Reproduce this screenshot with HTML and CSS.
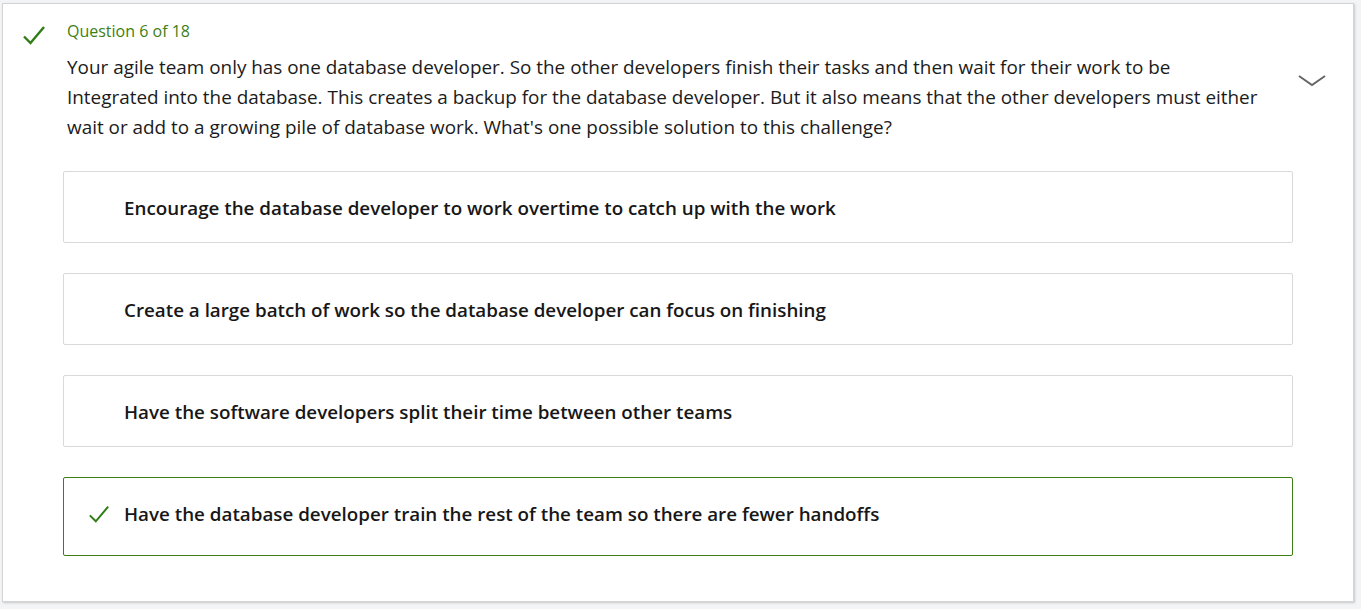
FILE: index.html
```html
<!DOCTYPE html>
<html>
<head>
<meta charset="utf-8">
<link rel="stylesheet" href="styles.css">
</head>
<body>
<div class="page">
  <div class="card">
    <div class="status">
      <svg class="check" viewBox="0 0 24 24" width="24" height="24"><path d="M2 13.5 L8.5 20 L22 4" fill="none" stroke="#2f7d14" stroke-width="2.4" stroke-linecap="butt" stroke-linejoin="miter"/></svg>
    </div>
    <div class="main">
      <div class="counter">Question 6 of 18</div>
      <p class="question">Your agile team only has one database developer. So the other developers finish their tasks and then wait for their work to be Integrated into the database. This creates a backup for the database developer. But it also means that the other developers must either wait or add to a growing pile of database work. What's one possible solution to this challenge?</p>
      <ul class="options">
        <li class="option"><span class="mark"></span><span class="label">Encourage the database developer to work overtime to catch up with the work</span></li>
        <li class="option"><span class="mark"></span><span class="label">Create a large batch of work so the database developer can focus on finishing</span></li>
        <li class="option"><span class="mark"></span><span class="label">Have the software developers split their time between other teams</span></li>
        <li class="option correct"><span class="mark"><svg viewBox="0 0 24 24" width="22" height="22"><path d="M2 13.5 L8.5 20 L22 4" fill="none" stroke="#2f7d14" stroke-width="2.2"/></svg></span><span class="label">Have the database developer train the rest of the team so there are fewer handoffs</span></li>
      </ul>
    </div>
    <div class="toggle">
      <svg viewBox="0 0 28 12" width="28" height="12"><path d="M1 1 L14 10 L27 1" fill="none" stroke="#666" stroke-width="2"/></svg>
    </div>
  </div>
</div>
</body>
</html>
```
FILE: styles.css
```css
html, body {
  margin: 0;
  padding: 0;
  background: #f3f4f6;
  font-family: "Open Sans", "Noto Sans", sans-serif;
  color: #1b1b1b;
}
.page {
  padding: 3px 7px 7px 2px;
}
.card {
  background: #fff;
  border: 1px solid #d4d4d4;
  box-shadow: 1px 1px 2px rgba(0,0,0,0.18);
  display: flex;
  min-height: 599px;
  box-sizing: border-box;
  padding-bottom: 44px;
}
.status {
  width: 60px;
  flex: none;
  padding-left: 19px;
  padding-top: 19px;
  box-sizing: border-box;
}
.check {
  display: block;
}
.main {
  width: 1230px;
  flex: none;
}
.counter {
  color: #3d7f14;
  font-size: 16px;
  line-height: 22px;
  margin: 16px 0 0 4px;
}
.question {
  margin: 10px 0 0 4px;
  font-size: 18.9px;
  line-height: 30px;
  padding-right: 30px;
}
.options {
  list-style: none;
  margin: 29px 0 0 0;
  padding: 0;
  display: flex;
  flex-direction: column;
  gap: 30px;
}
.option {
  border: 1px solid #d9d9d9;
  border-radius: 2px;
  height: 72px;
  box-sizing: border-box;
  display: flex;
  align-items: center;
  font-size: 18.8px;
  font-weight: 600;
  color: #171717;
  padding-top: 1px;
}
.option.correct {
  border-color: #3d7f14;
  height: 79px;
  padding-top: 0;
  padding-bottom: 5px;
}
.mark {
  width: 60px;
  flex: none;
  display: flex;
  justify-content: flex-end;
  padding-right: 14px;
  box-sizing: border-box;
}
.mark svg {
  display: block;
}
.toggle {
  flex: 1;
  display: flex;
  justify-content: center;
  padding-top: 71px;
  padding-right: 22px;
  box-sizing: border-box;
}
.toggle svg {
  display: block;
}
```
